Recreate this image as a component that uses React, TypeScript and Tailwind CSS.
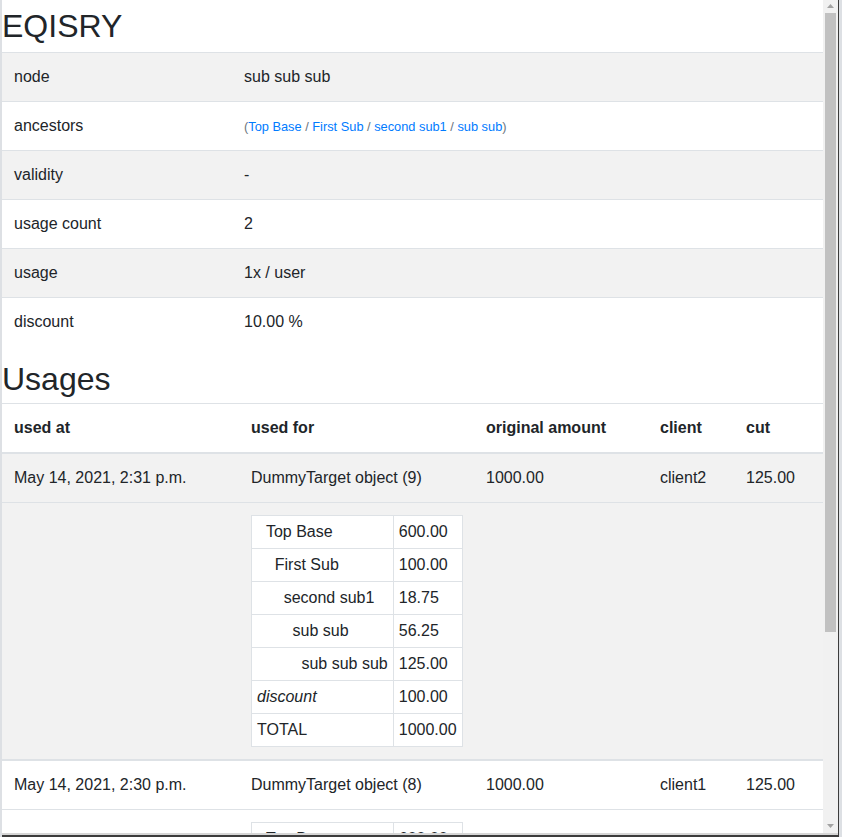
import React from 'react';

type Part = { label: string; amount: string; depth?: number; kind?: 'node' | 'discount' | 'total' };

interface Usage {
  usedAt: string;
  usedFor: string;
  original: string;
  client: string;
  cut: string;
  striped: boolean;
  parts: Part[];
}

const details: [string, React.ReactNode][] = [
  ['node', 'sub sub sub'],
  ['ancestors', null],
  ['validity', '-'],
  ['usage count', '2'],
  ['usage', '1x / user'],
  ['discount', '10.00 %'],
];

const breakdown: Part[] = [
  { label: 'Top Base', amount: '600.00', depth: 1 },
  { label: 'First Sub', amount: '100.00', depth: 2 },
  { label: 'second sub1', amount: '18.75', depth: 3 },
  { label: 'sub sub', amount: '56.25', depth: 4 },
  { label: 'sub sub sub', amount: '125.00', depth: 5 },
  { label: 'discount', amount: '100.00', kind: 'discount' },
  { label: 'TOTAL', amount: '1000.00', kind: 'total' },
];

const usages: Usage[] = [
  { usedAt: 'May 14, 2021, 2:31 p.m.', usedFor: 'DummyTarget object (9)', original: '1000.00', client: 'client2', cut: '125.00', striped: true, parts: breakdown },
  { usedAt: 'May 14, 2021, 2:30 p.m.', usedFor: 'DummyTarget object (8)', original: '1000.00', client: 'client1', cut: '125.00', striped: false, parts: breakdown },
];

const ancestors = ['Top Base', 'First Sub', 'second sub1', 'sub sub'];

const Ancestors = () => (
  <div className="flex h-6 items-center pt-[2px]">
    <span className="text-[12.8px] leading-4 text-[#6c757d]">
      (
      {ancestors.map((a, i) => (
        <React.Fragment key={a}>
          {i > 0 && ' / '}
          <a href="#" className="text-[#007bff]">{a}</a>
        </React.Fragment>
      ))}
      )
    </span>
  </div>
);

const Breakdown = ({ parts }: { parts: Part[] }) => (
  <table className="border-collapse bg-white">
    <tbody>
      {parts.map((p) => (
        <tr key={p.label}>
          <td className={`border border-[#dee2e6] px-[5px] py-1 leading-6 whitespace-pre ${p.kind === 'discount' ? 'italic' : ''}`}>
            {'\u00a0\u00a0'.repeat(p.depth ?? 0) + p.label}
          </td>
          <td className="border border-[#dee2e6] px-[5px] py-1 leading-6 whitespace-nowrap">{p.amount}</td>
        </tr>
      ))}
    </tbody>
  </table>
);

// fake classic scrollbar, the frame clips the page
const Scrollbar = () => (
  <div className="flex w-[15px] shrink-0 flex-col items-center bg-[#f1f1f1]">
    <svg width="15" height="13" viewBox="0 0 15 13" className="shrink-0">
      <path d="M4 8 L7.5 4 L11 8 Z" fill="#a3a3a3" />
    </svg>
    <div className="mx-[2px] h-[619px] w-[11px] shrink-0 bg-[#c1c1c1]" />
    <div className="flex-1" />
    <svg width="15" height="13" viewBox="0 0 15 13" className="shrink-0">
      <path d="M4 4 L11 4 L7.5 8 Z" fill="#a3a3a3" />
    </svg>
  </div>
);

export default function App() {
  const cell = 'px-3 py-3 leading-6 text-left align-top';
  return (
    <div className="h-[837px] w-[842px] overflow-hidden bg-[#dde0e4] pl-[2px] pr-[3px] font-['Liberation_Sans',Arial,sans-serif] text-[16px] text-[#212529]">
      <div className="h-[837px] border-r border-b-2 border-[#3c3c3c]">
        <div className="flex h-full border-b-2 border-[#d6d6d6]">
          <div className="min-w-0 flex-1 overflow-hidden bg-white">
            <h1 className="mt-[7px] mb-[7px] text-[32px] leading-[38px] font-normal">EQISRY</h1>

            <table className="w-full border-separate border-spacing-0">
              <tbody>
                {details.map(([k, v], i) => (
                  <tr key={k} className={i % 2 === 0 ? 'bg-[#f2f2f2]' : ''}>
                    <td className={`${cell} w-[230px] border-t border-[#dee2e6]`}>{k}</td>
                    <td className={`${cell} border-t border-[#dee2e6]`}>{k === 'ancestors' ? <Ancestors /> : v}</td>
                  </tr>
                ))}
              </tbody>
            </table>

            <h2 className="mt-[14px] mb-[5px] text-[32px] leading-[38px] font-normal">Usages</h2>

            <table className="mb-4 w-full border-separate border-spacing-0">
              <thead>
                <tr>
                  <th className={`${cell} w-[237px] border-t border-b-2 border-[#dee2e6]`}>used at</th>
                  <th className={`${cell} w-[235px] border-t border-b-2 border-[#dee2e6]`}>used for</th>
                  <th className={`${cell} w-[174px] border-t border-b-2 border-[#dee2e6]`}>original amount</th>
                  <th className={`${cell} w-[86px] border-t border-b-2 border-[#dee2e6]`}>client</th>
                  <th className={`${cell} border-t border-b-2 border-[#dee2e6]`}>cut</th>
                </tr>
              </thead>
              {usages.map((u, i) => (
                <tbody key={u.usedAt} className={u.striped ? 'bg-[#f2f2f2]' : ''}>
                  <tr>
                    {[u.usedAt, u.usedFor, u.original, u.client, u.cut].map((c, j) => (
                      <td key={j} className={`${cell} ${i > 0 ? 'border-t-2' : ''} border-[#dee2e6]`}>{c}</td>
                    ))}
                  </tr>
                  <tr>
                    <td className={`${cell} border-t border-[#dee2e6]`}></td>
                    <td colSpan={4} className={`${cell} border-t border-[#dee2e6]`}>
                      <Breakdown parts={u.parts} />
                    </td>
                  </tr>
                </tbody>
              ))}
            </table>
          </div>
          <Scrollbar />
        </div>
      </div>
    </div>
  );
}
